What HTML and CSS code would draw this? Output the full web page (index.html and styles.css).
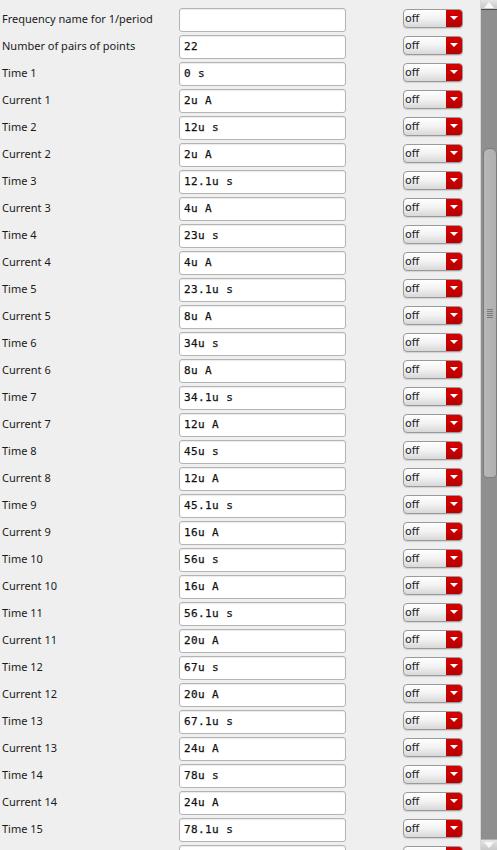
FILE: index.html
```html
<!DOCTYPE html>
<html>
<head>
<meta charset="utf-8">
<link rel="stylesheet" href="styles.css">
</head>
<body>
<div class="window">
  <div class="form" id="form">
    <div class="row"><span class="label">Frequency name for 1/period</span><div class="field"></div><div class="select"><span class="sv">off</span><span class="sb"><i></i></span></div></div>
    <div class="row"><span class="label">Number of pairs of points</span><div class="field">22</div><div class="select"><span class="sv">off</span><span class="sb"><i></i></span></div></div>
    <div class="row"><span class="label">Time 1</span><div class="field">0 s</div><div class="select"><span class="sv">off</span><span class="sb"><i></i></span></div></div>
    <div class="row"><span class="label">Current 1</span><div class="field">2u A</div><div class="select"><span class="sv">off</span><span class="sb"><i></i></span></div></div>
    <div class="row"><span class="label">Time 2</span><div class="field">12u s</div><div class="select"><span class="sv">off</span><span class="sb"><i></i></span></div></div>
    <div class="row"><span class="label">Current 2</span><div class="field">2u A</div><div class="select"><span class="sv">off</span><span class="sb"><i></i></span></div></div>
    <div class="row"><span class="label">Time 3</span><div class="field">12.1u s</div><div class="select"><span class="sv">off</span><span class="sb"><i></i></span></div></div>
    <div class="row"><span class="label">Current 3</span><div class="field">4u A</div><div class="select"><span class="sv">off</span><span class="sb"><i></i></span></div></div>
    <div class="row"><span class="label">Time 4</span><div class="field">23u s</div><div class="select"><span class="sv">off</span><span class="sb"><i></i></span></div></div>
    <div class="row"><span class="label">Current 4</span><div class="field">4u A</div><div class="select"><span class="sv">off</span><span class="sb"><i></i></span></div></div>
    <div class="row"><span class="label">Time 5</span><div class="field">23.1u s</div><div class="select"><span class="sv">off</span><span class="sb"><i></i></span></div></div>
    <div class="row"><span class="label">Current 5</span><div class="field">8u A</div><div class="select"><span class="sv">off</span><span class="sb"><i></i></span></div></div>
    <div class="row"><span class="label">Time 6</span><div class="field">34u s</div><div class="select"><span class="sv">off</span><span class="sb"><i></i></span></div></div>
    <div class="row"><span class="label">Current 6</span><div class="field">8u A</div><div class="select"><span class="sv">off</span><span class="sb"><i></i></span></div></div>
    <div class="row"><span class="label">Time 7</span><div class="field">34.1u s</div><div class="select"><span class="sv">off</span><span class="sb"><i></i></span></div></div>
    <div class="row"><span class="label">Current 7</span><div class="field">12u A</div><div class="select"><span class="sv">off</span><span class="sb"><i></i></span></div></div>
    <div class="row"><span class="label">Time 8</span><div class="field">45u s</div><div class="select"><span class="sv">off</span><span class="sb"><i></i></span></div></div>
    <div class="row"><span class="label">Current 8</span><div class="field">12u A</div><div class="select"><span class="sv">off</span><span class="sb"><i></i></span></div></div>
    <div class="row"><span class="label">Time 9</span><div class="field">45.1u s</div><div class="select"><span class="sv">off</span><span class="sb"><i></i></span></div></div>
    <div class="row"><span class="label">Current 9</span><div class="field">16u A</div><div class="select"><span class="sv">off</span><span class="sb"><i></i></span></div></div>
    <div class="row"><span class="label">Time 10</span><div class="field">56u s</div><div class="select"><span class="sv">off</span><span class="sb"><i></i></span></div></div>
    <div class="row"><span class="label">Current 10</span><div class="field">16u A</div><div class="select"><span class="sv">off</span><span class="sb"><i></i></span></div></div>
    <div class="row"><span class="label">Time 11</span><div class="field">56.1u s</div><div class="select"><span class="sv">off</span><span class="sb"><i></i></span></div></div>
    <div class="row"><span class="label">Current 11</span><div class="field">20u A</div><div class="select"><span class="sv">off</span><span class="sb"><i></i></span></div></div>
    <div class="row"><span class="label">Time 12</span><div class="field">67u s</div><div class="select"><span class="sv">off</span><span class="sb"><i></i></span></div></div>
    <div class="row"><span class="label">Current 12</span><div class="field">20u A</div><div class="select"><span class="sv">off</span><span class="sb"><i></i></span></div></div>
    <div class="row"><span class="label">Time 13</span><div class="field">67.1u s</div><div class="select"><span class="sv">off</span><span class="sb"><i></i></span></div></div>
    <div class="row"><span class="label">Current 13</span><div class="field">24u A</div><div class="select"><span class="sv">off</span><span class="sb"><i></i></span></div></div>
    <div class="row"><span class="label">Time 14</span><div class="field">78u s</div><div class="select"><span class="sv">off</span><span class="sb"><i></i></span></div></div>
    <div class="row"><span class="label">Current 14</span><div class="field">24u A</div><div class="select"><span class="sv">off</span><span class="sb"><i></i></span></div></div>
    <div class="row"><span class="label">Time 15</span><div class="field">78.1u s</div><div class="select"><span class="sv">off</span><span class="sb"><i></i></span></div></div>
    <div class="row"><span class="label"></span><div class="field"></div><div class="select"><span class="sv"></span><span class="sb"><i></i></span></div></div>
  </div>
  <div class="scrollbar">
    <div class="arrow up"><i></i></div>
    <div class="track">
      <div class="spacer-top"></div>
      <div class="thumb"><div class="grip"><b></b><b></b><b></b><b></b><b></b></div></div>
    </div>
    <div class="arrow down"><i></i></div>
  </div>
</div>
</body>
</html>
```

FILE: styles.css
```css
html, body {
  margin: 0;
  padding: 0;
  height: 850px;
  overflow: hidden;
  background: #efefef;
}
.window {
  display: flex;
  width: 497px;
  height: 850px;
}
.form {
  flex: 1;
  padding-top: 8px;
  overflow: hidden;
  display: flex;
  flex-direction: column;
}
.row {
  display: flex;
  align-items: flex-start;
  height: 27px;
  flex: none;
}
.label {
  width: 177px;
  padding-left: 2px;
  font-family: "Noto Sans", "Open Sans", sans-serif;
  font-size: 11px;
  color: #1a1a1a;
  line-height: 22px;
  white-space: nowrap;
}
.field {
  box-sizing: border-box;
  width: 167px;
  height: 24px;
  background: #fff;
  border: 1px solid #b4b4b4;
  border-radius: 3px;
  box-shadow: inset 0 1px 1px rgba(0,0,0,0.08);
  font-family: "DejaVu Sans Mono", monospace;
  font-size: 11px;
  line-height: 22px;
  padding-left: 4px;
  color: #111;
  letter-spacing: 0.4px;
  -webkit-text-stroke: 0.25px #111;
}
.select {
  box-sizing: border-box;
  margin-left: 57px;
  margin-top: 1px;
  width: 60px;
  height: 19px;
  display: flex;
  border: 1px solid #9a9a9a;
  border-radius: 4px;
  overflow: hidden;
  background: linear-gradient(#ffffff, #f2f2f2 50%, #d8d8d8);
  box-shadow: 0 1px 1px rgba(0,0,0,0.12);
}
.sv {
  flex: 1;
  font-family: "DejaVu Sans", sans-serif;
  font-size: 11px;
  line-height: 17px;
  padding-left: 1px;
  color: #222;
}
.sb {
  width: 16px;
  background: linear-gradient(#d40000, #b80000);
  display: flex;
  align-items: center;
  justify-content: center;
}
.sb i {
  width: 0;
  height: 0;
  border-left: 4px solid transparent;
  border-right: 4px solid transparent;
  border-top: 4px solid #fff;
  margin-top: -1px;
}
.scrollbar {
  width: 17px;
  flex: none;
  display: flex;
  flex-direction: column;
  background: #8f8f8f;
  border-left: 1px solid #d6d6d6;
  box-sizing: border-box;
}
.arrow {
  height: 9px;
  flex: none;
  background: linear-gradient(#e4e4e4, #c8c8c8);
  display: flex;
  align-items: center;
  justify-content: center;
}
.arrow.up { border-bottom: 1px solid #4a4a4a; }
.arrow.down { border-top: 1px solid #b0b0b0; height: 10px; }
.arrow i {
  width: 0;
  height: 0;
  border-left: 5px solid transparent;
  border-right: 5px solid transparent;
}
.arrow.up i { border-bottom: 6px solid #f8f8f8; }
.arrow.down i { border-top: 6px solid #f8f8f8; }
.track {
  flex: 1;
  display: flex;
  flex-direction: column;
  align-items: center;
}
.spacer-top { height: 138px; flex: none; }
.thumb {
  box-sizing: border-box;
  width: 14px;
  height: 330px;
  margin-left: 1px;
  background: linear-gradient(90deg, #b8b8b8, #b0b0b0);
  border: 1px solid #7c7c7c;
  border-radius: 6px 6px 4px 4px;
  display: flex;
  align-items: center;
  justify-content: center;
}
.grip {
  display: flex;
  flex-direction: column;
  gap: 1px;
}
.grip b {
  display: block;
  width: 6px;
  height: 1px;
  background: #7a7a7a;
}
```
